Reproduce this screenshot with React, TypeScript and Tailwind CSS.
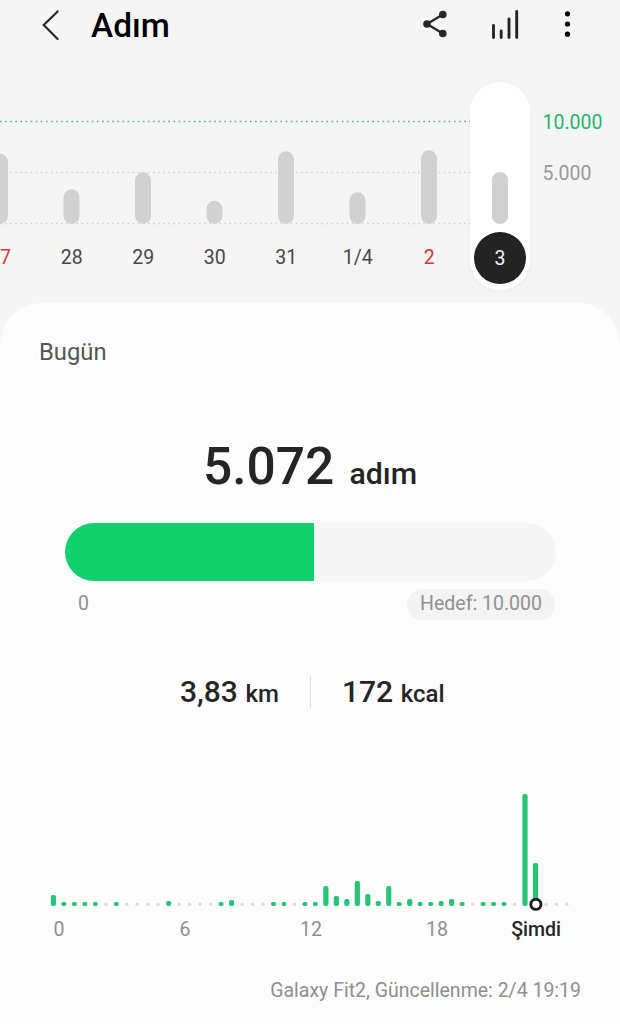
import { clsx } from 'clsx';

type Day = {
  label: string;
  height: number;
  holiday?: boolean;
};

const days: Day[] = [
  { label: '7', height: 70, holiday: true },
  { label: '28', height: 34.5 },
  { label: '29', height: 51.5 },
  { label: '30', height: 23 },
  { label: '31', height: 72.5 },
  { label: '1/4', height: 31.5 },
  { label: '2', height: 73.5, holiday: true },
];

const DAY_WIDTH = 71.5;
const HALF_HOUR_WIDTH = 10.48;

// bar height per half hour, 0 is drawn as a grey dot
const activity = [
  11, 4, 4, 4, 4, 0, 4, 0, 0, 0, 0, 5, 0, 0, 0, 0, 4, 6, 0, 0, 0, 4, 4, 0, 4, 4, 20, 10, 7, 25, 12, 5, 20, 4, 7, 4, 4,
  5, 7, 4, 0, 4, 4, 4, 0, 112, 43, 0, 0, 0,
];

const hours = ['0', '6', '12', '18'];

function Header() {
  return (
    <header className="flex h-[52px] items-center">
      <svg className="mb-[3px] ml-[40px] h-[34px] w-[22px]" viewBox="0 0 22 34" fill="none">
        <path d="M17.6 3.4 3.7 17l13.9 13.9" stroke="#252525" strokeWidth="2.1" strokeLinecap="round" />
      </svg>
      <h1 className="ml-[29px] text-[33.4px] leading-[52px] font-medium text-black">Adım</h1>
      <div className="mb-[4px] ml-auto flex items-center">
        <svg className="h-[30px] w-[28px]" viewBox="0 0 28 30">
          <path d="M22.8 5.5 7 15l15.8 9.5" fill="none" stroke="#252525" strokeWidth="2.3" />
          <circle cx="22.8" cy="5.5" r="3.8" fill="#252525" />
          <circle cx="7" cy="15" r="3.8" fill="#252525" />
          <circle cx="22.8" cy="24.5" r="3.8" fill="#252525" />
        </svg>
        <svg className="ml-[42px] h-[32px] w-[30px]" viewBox="0 0 30 32">
          <path
            d="M3.5 17.5v12M11.2 23v6.5M19 11v18.5M26.7 3.5v26"
            fill="none"
            stroke="#252525"
            strokeWidth="2.9"
            strokeLinecap="round"
          />
        </svg>
        <svg className="mr-[47px] ml-[42px] h-[30px] w-[11px]" viewBox="0 0 11 30">
          <circle cx="5.5" cy="4.8" r="2.6" />
          <circle cx="5.5" cy="15" r="2.6" />
          <circle cx="5.5" cy="25.2" r="2.6" />
        </svg>
      </div>
    </header>
  );
}

function WeekChart() {
  return (
    <section className="mt-[30px] flex h-[221px]">
      <div className="w-[470px] overflow-hidden">
        <svg className="block h-[150px] w-[470px]" viewBox="0 0 470 150">
          <path d="M0 39.5h470" stroke="#52bd8a" strokeWidth="1.6" strokeDasharray="1.7 3.4" />
          <path d="M0 90.5h470M0 141.5h470" stroke="#cfcfcf" strokeWidth="1.4" strokeDasharray="1.6 3.5" />
          {days.map((day, i) => (
            <rect
              key={day.label}
              x={i * DAY_WIDTH - 8}
              y={141.8 - day.height}
              width="16"
              height={day.height}
              rx="8"
              fill="#d1d1d1"
            />
          ))}
        </svg>
        <div className="flex pt-[11px]">
          {days.map((day) => (
            <span
              key={day.label}
              className={clsx(
                'w-[71.5px] shrink-0 text-center text-[19.5px] leading-[30px] first:w-[36px] first:text-left',
                day.holiday ? 'text-[#cf3a42]' : 'text-[#474747]'
              )}
            >
              {day.label}
            </span>
          ))}
        </div>
      </div>
      <div className="flex h-[208px] w-[60px] flex-col items-center rounded-full bg-white pt-[90px] shadow-[0_0_6px_rgba(0,0,0,0.03)]">
        <div className="h-[52px] w-4 rounded-full bg-[#d1d1d1]" />
        <div className="mt-[8px] flex size-[52px] items-center justify-center rounded-full bg-[#232323] pt-px text-[19.5px] leading-none text-[#f2f2f2]">
          3
        </div>
      </div>
      <div className="ml-[12.5px] flex flex-col pt-[26px] text-[19.5px] leading-[30px]">
        <span className="text-[#25b573]">10.000</span>
        <span className="mt-[21px] text-[#999]">5.000</span>
      </div>
    </section>
  );
}

function DayChart() {
  return (
    <div className="mt-[75px]">
      <svg className="block h-[126px] w-full" viewBox="0 786 620 126">
        {activity.map((height, i) => {
          const x = 53.4 + i * HALF_HOUR_WIDTH;
          if (!height) {
            return <circle key={i} cx={x} cy="904.2" r="1.6" fill="#d9d9d9" />;
          }
          return <rect key={i} x={x - 2.6} y={906 - height} width="5.2" height={height} rx="2" fill="#27c475" />;
        })}
        <circle cx="535.9" cy="904.3" r="5.1" fill="#fff" stroke="#202020" strokeWidth="2.9" />
      </svg>
      <div className="flex pt-[3px] text-center text-[19.5px] leading-[30px] text-[#8f8f8f]">
        <div className="-ml-[4px] flex">
          {hours.map((hour) => (
            <span key={hour} className="w-[126px]">
              {hour}
            </span>
          ))}
        </div>
        <span className="-ml-[4px] w-[80px] font-medium text-[#252525]">Şimdi</span>
      </div>
    </div>
  );
}

export default function App() {
  return (
    <main className="h-[1024px] w-[620px] overflow-hidden bg-[#f5f5f5] font-['Roboto',sans-serif]">
      <Header />
      <WeekChart />
      <section className="h-[721px] rounded-t-[42px] bg-[#fdfdfd] pt-[33px]">
        <h2 className="ml-[39px] text-[23.8px] leading-[32px] text-[#555]">Bugün</h2>

        <div className="mt-[69px] flex h-[60px] items-baseline pl-[203px] font-medium text-[#252525]">
          <span className="text-[51.5px] leading-[60px]">5.072</span>
          <span className="ml-[15px] text-[30.3px]">adım</span>
        </div>

        <div className="mt-[26px] ml-[65px] h-[58px] w-[491px] overflow-hidden rounded-full bg-[#f5f5f5]">
          <div className="h-full w-[50.72%] bg-[#13d06e]" />
        </div>
        <div className="mt-[8px] mr-[65px] ml-[78px] flex justify-between text-[19.5px] leading-[29px] text-[#919191]">
          <span>0</span>
          <span className="h-[31px] w-[148px] rounded-full bg-[#f3f3f3] text-center">Hedef: 10.000</span>
        </div>

        <div className="mt-[55px] flex h-[36px] items-center font-medium text-[#252525]">
          <p className="ml-[180px] w-[130px] text-[30px] leading-[36px]">
            3,83<span className="ml-[7.5px] text-[24px]">km</span>
          </p>
          <div className="mb-[2px] h-8 w-px bg-[#dedede]" />
          <p className="ml-[31px] text-[30px] leading-[36px]">
            172<span className="ml-[7.5px] text-[24px]">kcal</span>
          </p>
        </div>

        <DayChart />

        <p className="mt-[31px] pr-[39px] text-right text-[19.5px] leading-[30px] text-[#8f8f8f]">
          Galaxy Fit2, Güncellenme: 2/4 19:19
        </p>
      </section>
    </main>
  );
}
